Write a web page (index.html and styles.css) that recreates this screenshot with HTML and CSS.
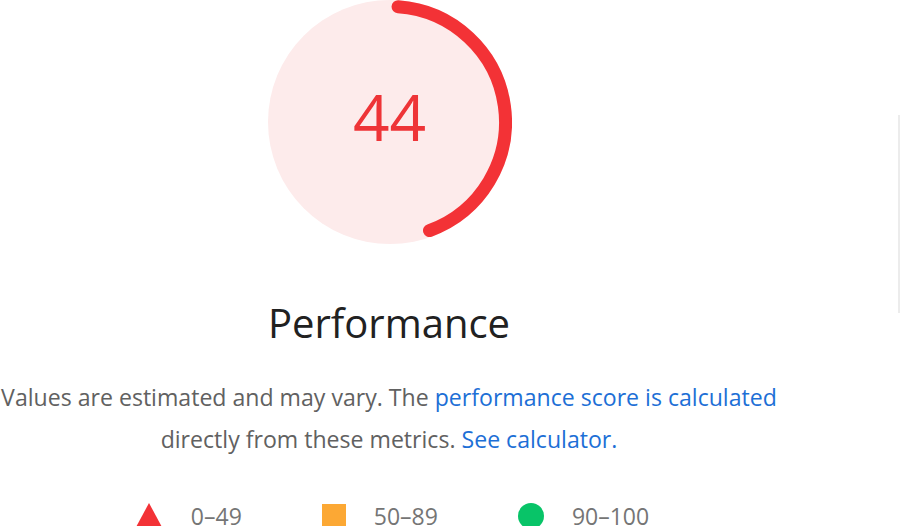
FILE: index.html
```html
<!DOCTYPE html>
<html lang="en">
<head>
<meta charset="utf-8">
<title>Performance</title>
<link rel="stylesheet" href="styles.css">
</head>
<body>
<div class="page">
  <div class="col">
    <div class="gauge">
      <svg class="gauge-svg" width="244" height="244" viewBox="0 0 244 244">
        <circle class="gauge-base" cx="122" cy="122" r="122"/>
        <path class="gauge-arc" d="M130.06 6.78 A115.5 115.5 0 0 1 161.5 230.53"/>
      </svg>
      <div class="gauge-value">44</div>
    </div>
    <div class="title">Performance</div>
    <p class="desc">Values are estimated and may vary. The <a href="#">performance score is calculated</a><br>directly from these metrics. <a href="#">See calculator.</a></p>
    <div class="legend">
      <div class="legend-item"><span class="shape tri"></span><span>0–49</span></div>
      <div class="legend-item"><span class="shape sq"></span><span>50–89</span></div>
      <div class="legend-item"><span class="shape dot"></span><span>90–100</span></div>
    </div>
  </div>
  <div class="divider-wrap"><div class="divider"></div></div>
</div>
</body>
</html>
```
FILE: styles.css
```css
html, body {
  margin: 0;
  padding: 0;
  background: #fff;
  overflow: hidden;
}
body {
  font-family: "Open Sans", "Noto Sans", sans-serif;
  width: 900px;
  height: 526px;
}
.page {
  display: flex;
  width: 900px;
  height: 526px;
}
.col {
  width: 778px;
  display: flex;
  flex-direction: column;
  align-items: center;
}
.gauge {
  display: grid;
  width: 244px;
  height: 244px;
  margin-left: 1px;
}
.gauge-svg, .gauge-value {
  grid-area: 1 / 1;
}
.gauge-base {
  fill: #fdebeb;
}
.gauge-arc {
  fill: none;
  stroke: #f33236;
  stroke-width: 13;
  stroke-linecap: round;
}
.gauge-value {
  display: flex;
  align-items: center;
  justify-content: center;
  font-size: 64px;
  color: #ee3437;
  padding-bottom: 12px;
}
.title {
  margin-top: 51px;
  font-size: 40px;
  line-height: 56px;
  color: #212121;
}
.desc {
  margin: 25px 0 0;
  font-size: 23.1px;
  line-height: 42px;
  color: #616161;
  text-align: center;
  white-space: nowrap;
}
.desc a {
  color: #1d6fd6;
  text-decoration: none;
}
.legend {
  display: flex;
  gap: 80px;
  margin-top: 40px;
  margin-left: 6px;
  font-size: 23px;
  color: #757575;
}
.legend-item {
  display: flex;
  align-items: center;
  gap: 28px;
}
.shape {
  display: inline-block;
}
.tri {
  width: 0;
  height: 0;
  border-left: 14px solid transparent;
  border-right: 14px solid transparent;
  border-bottom: 26px solid #f33236;
}
.sq {
  width: 24px;
  height: 24px;
  background: #fca834;
}
.dot {
  width: 26px;
  height: 26px;
  border-radius: 50%;
  background: #08c468;
}
.divider-wrap {
  flex: 1;
  display: flex;
  justify-content: flex-end;
  padding-top: 115px;
}
.divider {
  width: 2px;
  height: 198px;
  background: #ececec;
}
```
